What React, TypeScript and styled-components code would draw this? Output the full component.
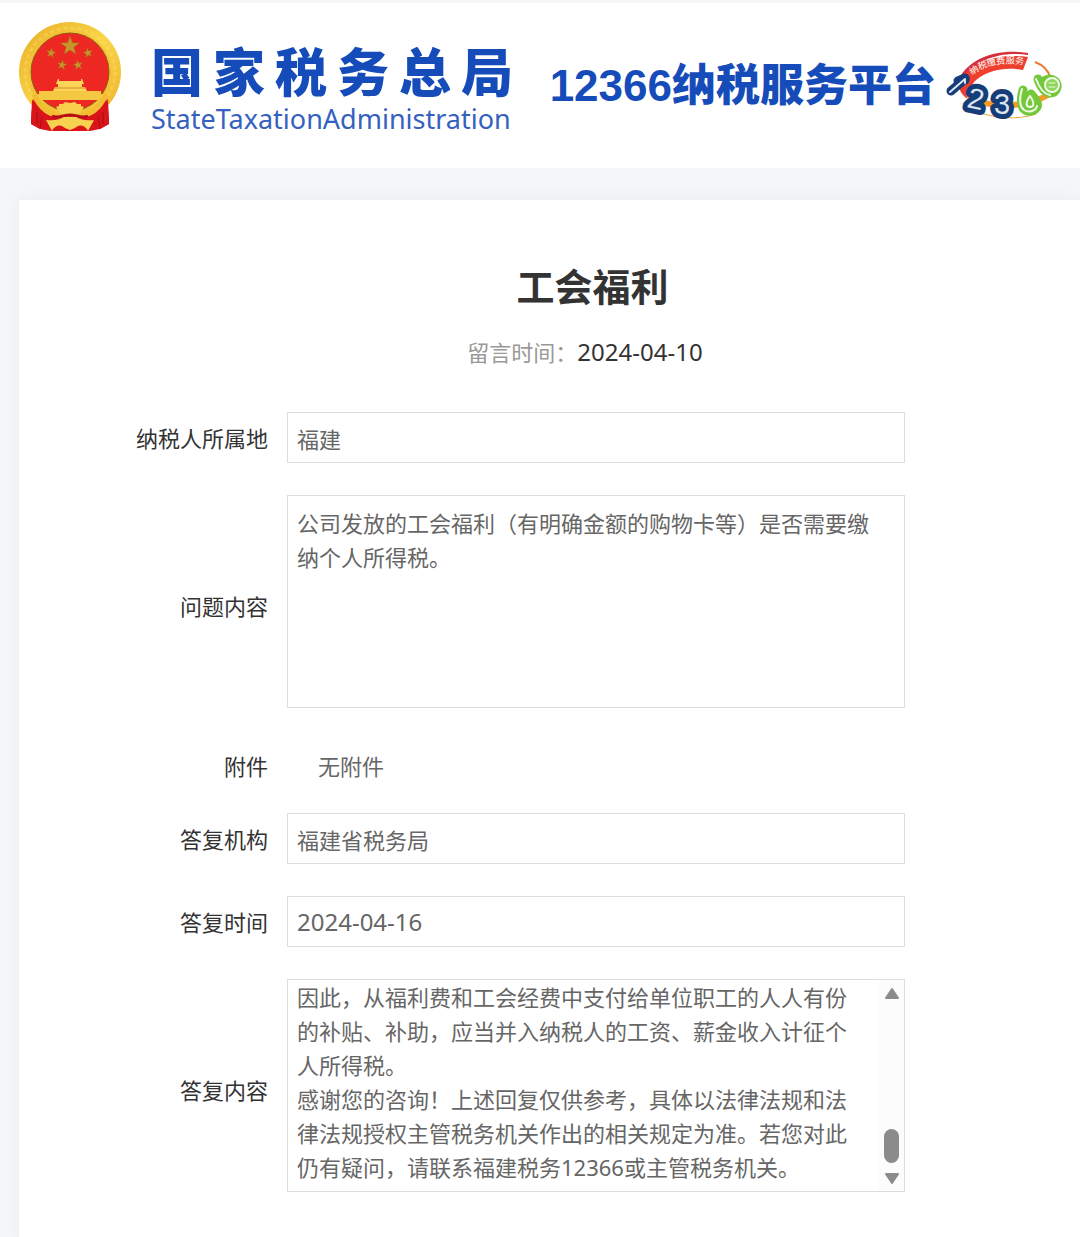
import React, { useRef } from "react";
import styled, { createGlobalStyle } from "styled-components";

const sans = `"Noto Sans", "Noto Sans CJK SC", sans-serif`;
const brandBlue = "#154cba";

const GlobalStyle = createGlobalStyle`
  * { box-sizing: border-box; }
  body { margin: 0; background: #f4f6f8; color: #333; font-family: ${sans}; }
`;

const Header = styled.header`
  display: flex;
  align-items: flex-start;
  height: 168px;
  padding: 19px 16px 0 19px;
  border-top: 3px solid #f5f5f5;
  background: #fff;
`;

const Brand = styled.a`
  display: flex;
  align-items: flex-start;
  flex: none;
  color: ${brandBlue};
  text-decoration: none;
`;

const BrandText = styled.span`
  display: flex;
  flex-direction: column;
  gap: 5px;
  margin-left: 30px;
  padding-top: 20px;
`;

const BrandName = styled.span`
  font: 900 52px/56px "Noto Sans CJK SC", sans-serif;
  letter-spacing: 10px;
`;

const BrandLatin = styled.span`
  font: 400 27px/32px ${sans};
  color: #3561c0;
`;

const Platform = styled.div`
  display: flex;
  align-items: center;
  flex: none;
  gap: 10px;
  margin-left: auto;
  padding-top: 29px;
`;

const PlatformName = styled.span`
  color: ${brandBlue};
  font: 900 44px/68px "Liberation Sans", "Noto Sans CJK SC", sans-serif;
`;

const Card = styled.main`
  margin: 32px 0 0 19px;
  padding: 60px 0 45px;
  background: #fff;
  box-shadow: 0 0 16px rgba(60, 80, 110, 0.05);
`;

const TitleBlock = styled.div`
  display: flex;
  flex-direction: column;
  align-items: center;
  margin-bottom: 42px;
`;

const Title = styled.h1`
  margin: 0 0 24px 86px;
  font: 700 38px/50px "Noto Sans CJK SC", sans-serif;
`;

const Posted = styled.p`
  display: flex;
  align-items: center;
  margin: 0 0 0 71px;
  color: #999;
  font-size: 22px;
  line-height: 36px;
`;

const PostedDate = styled.time`
  color: #333;
  font-size: 24px;
`;

const Form = styled.form`
  display: grid;
  grid-template-columns: 249px minmax(0, 618px);
  column-gap: 19px;
  align-items: center;
`;

const Row = styled.div<{ $after?: number }>`
  display: grid;
  grid-column: 1 / -1;
  grid-template-columns: subgrid;
  align-items: center;
  margin-bottom: ${(p) => p.$after ?? 32}px;
`;

const Label = styled.label<{ $tall?: boolean }>`
  padding-top: ${(p) => (p.$tall ? 8 : 0)}px;
  text-align: right;
  font-size: 22px;
  line-height: 34px;
`;

const Field = styled.input<{ $numeric?: boolean }>`
  width: 100%;
  height: 51px;
  padding: 0 9px;
  border: 1px solid #ddd;
  background: #fff;
  color: #666;
  font-family: ${sans};
  font-size: ${(p) => (p.$numeric ? 24 : 22)}px;
  outline: none;
`;

const AreaFrame = styled.div`
  display: flex;
  height: 213px;
  border: 1px solid #ddd;
`;

const Area = styled.textarea<{ $scrolled?: boolean }>`
  flex: 1;
  min-width: 0;
  padding: ${(p) => (p.$scrolled ? "0 14px 0 9px" : "10px 16px 0 9px")};
  border: 0;
  background: #fff;
  color: #666;
  font: 400 22px/34px ${sans};
  resize: none;
  overflow: hidden;
  outline: none;
`;

const Attachment = styled.output`
  padding-left: 31px;
  color: #666;
  font-size: 22px;
  line-height: 34px;
`;

const Scrollbar = styled.div`
  display: flex;
  flex-direction: column;
  align-items: center;
  flex: none;
  width: 25px;
  padding: 7px 0 6px;
  background: #fcfcfc;
`;

const Arrow = styled.button`
  display: flex;
  padding: 0;
  border: 0;
  background: none;
`;

const Thumb = styled.div`
  width: 15px;
  height: 34px;
  margin: auto 0 9px;
  border-radius: 8px;
  background: #8b8b8b;
`;

const star = (cx: number, cy: number, r: number, turn = 0) =>
  Array.from({ length: 10 }, (_, i) => {
    const a = ((i * 36 - 90 + turn) * Math.PI) / 180;
    const d = i % 2 ? r * 0.4 : r;
    return `${cx + d * Math.cos(a)},${cy + d * Math.sin(a)}`;
  }).join(" ");

function Emblem() {
  return (
    <svg width="102" height="110" viewBox="0 0 102 110" role="img" aria-label="国徽">
      <defs>
        <linearGradient id="gold" x1="0" y1="0" x2="1" y2="1">
          <stop offset="0" stopColor="#e9ad25" />
          <stop offset="0.5" stopColor="#f9d548" />
          <stop offset="1" stopColor="#eeb12b" />
        </linearGradient>
      </defs>
      <ellipse cx="51" cy="50" rx="51" ry="50" fill="url(#gold)" />
      <ellipse cx="51" cy="50" rx="45" ry="44" fill="none" stroke="#ffe373" strokeWidth="3" strokeDasharray="4 3" opacity="0.35" />
      <path d="M15 75c-2 9-3 18-3 27l9 5 10 2h40l10-2 9-5c0-9-1-18-3-27Z" fill="#d9151b" />
      <ellipse cx="51" cy="52" rx="42" ry="43" fill="#f4c236" />
      <ellipse cx="51" cy="50" rx="39" ry="39" fill="#ed2822" stroke="#8d5a17" strokeWidth="1" />
      <g fill="#c9952b" stroke="#a96b19" strokeWidth="0.5">
        <polygon points={star(51, 24, 10)} />
        <polygon points={star(32, 31, 5, 10)} />
        <polygon points={star(69, 31, 5, -10)} />
        <polygon points={star(43, 43, 5, 10)} />
        <polygon points={star(59, 43, 5, -10)} />
      </g>
      <path d="M39 57h1v2h22v-2h1l2 5h-2v3h3l2 4h-2v3h-30v-3h-2l2-4h3v-3h-2Z" fill="#fbd557" />
      <path d="M36 66h30" stroke="#d98b22" />
      <path d="M20 69h62v3l5 1v5H15v-5l5-1Z" fill="#f5c842" />
      <path d="M13 77c4 9 12 16 21 20 5-1 11-4 17-4s12 3 17 4c9-4 17-11 21-20l1 25-9 5-5-9c-6 2-15 1-25-2-10 3-19 4-25 2l-5 9-9-5Z" fill="#d9151b" />
      <path d="M15 72c6 15 16 22 30 22l6-3 6 3c14 0 24-7 30-22" fill="none" stroke="#f2bd33" strokeWidth="5" />
      <path d="m41 91-4-6 3-1v-2l4 0 2-2 5 1 5-1 2 2 4 0v2l3 1-4 6-6 2h-8Z" fill="#f7cd4c" />
      <path d="M33 94c6 3 12-1 18-1s12 4 18 1" fill="none" stroke="#b80e15" strokeWidth="3" />
      <path d="M27 98c9 1 15-1 18-3h12c3 2 9 4 18 3l-6 11c-3-6-8-6-10-5l-3 2-5 2-5-2-3-2c-2-1-7-1-10 5Z" fill="#f7d150" />
      <path d="M18 90v12M23 95l-2 11M79 95l2 11M84 90v12" stroke="#a80c14" />
    </svg>
  );
}

const Digit = styled.text`
  fill: #dbe5f2;
  stroke: #173d78;
  stroke-width: 10px;
  stroke-linejoin: round;
  paint-order: stroke;
  font: 400 29px "Liberation Sans", sans-serif;
`;

const Slogan = styled.text`
  fill: #fff;
  font: 400 9px "Noto Sans CJK SC", sans-serif;
`;

function HotlineMark() {
  return (
    <svg width="118" height="70" viewBox="0 0 118 70" role="img" aria-label="12366">
      <path d="M13 28C23 7 52-3 82 2v2C54 0 31 9 20 25" fill="#d4303c" />
      <path d="M17 26C28 10 54 2 82 6l-5 13c-21-4-38 2-48 11-5 5-5 12 0 18l-9-1c-8-7-9-14-3-21Z" fill="#ee3f2e" />
      <path id="slogan-arc" d="M26 24C38 15 55 10 80 14" fill="none" />
      <Slogan>
        <textPath href="#slogan-arc">纳税缴费服务</textPath>
      </Slogan>
      <path d="M89 11c8 3 13 8 15 15" fill="none" stroke="#ec7a32" strokeWidth="2" />
      <path d="M22 44c18 14 56 14 82-1" fill="none" stroke="#f79b28" strokeWidth="6" />
      <path d="M30 60c18 8 42 9 60 3" fill="none" stroke="#f0a23c" />
      <g fill="none" strokeLinecap="round" strokeLinejoin="round">
        <path d="m5 40 14-12v1" stroke="#173d78" strokeWidth="9" />
        <path d="m12 30 7-3" stroke="#173d78" strokeWidth="9" />
        <path d="m4 41 15-13v4" stroke="#dbe5f2" strokeWidth="2" />
      </g>
      <Digit x="22" y="58" transform="rotate(12 30 48)">2</Digit>
      <Digit x="48" y="63">3</Digit>
      <g strokeLinecap="round" strokeLinejoin="round">
        <path d="M77 39c-2 7-2 14 0 18 4 5 11 4 14-1 2-5-3-9-6-13" fill="#73c83c" stroke="#73c83c" strokeWidth="9" />
        <path d="M76 38c-3 10-3 17 2 21 5 3 12 1 13-4M84 45c-5 7-4 11 0 11s5-4 0-11" fill="none" stroke="#effae5" strokeWidth="2" />
        <path d="M92 28c2 6 5 13 12 14 7 0 9-8 5-12-4-3-8-2-11 0" fill="#73c83c" stroke="#73c83c" strokeWidth="9" />
        <path d="M90 28c3 8 7 15 14 16" fill="none" stroke="#effae5" strokeWidth="2" />
        <circle cx="106" cy="34" r="7" fill="#8fd45d" stroke="#effae5" strokeWidth="2" />
        <path d="M103 32h6M103 36h6" stroke="#effae5" />
      </g>
    </svg>
  );
}

const answer =
  "因此，从福利费和工会经费中支付给单位职工的人人有份的补贴、补助，应当并入纳税人的工资、薪金收入计征个人所得税。\n感谢您的咨询！上述回复仅供参考，具体以法律法规和法律法规授权主管税务机关作出的相关规定为准。若您对此仍有疑问，请联系福建税务12366或主管税务机关。";

export default function App() {
  const answerRef = useRef<HTMLTextAreaElement>(null);
  const scroll = (by: number) => answerRef.current?.scrollBy({ top: by });

  return (
    <>
      <GlobalStyle />
      <Header>
        <Brand href="#">
          <Emblem />
          <BrandText>
            <BrandName>国家税务总局</BrandName>
            <BrandLatin>StateTaxationAdministration</BrandLatin>
          </BrandText>
        </Brand>
        <Platform>
          <PlatformName>12366纳税服务平台</PlatformName>
          <HotlineMark />
        </Platform>
      </Header>
      <Card>
        <TitleBlock>
          <Title>工会福利</Title>
          <Posted>
            留言时间：<PostedDate>2024-04-10</PostedDate>
          </Posted>
        </TitleBlock>
        <Form>
          <Row>
            <Label htmlFor="region">纳税人所属地</Label>
            <Field id="region" readOnly defaultValue="福建" />
          </Row>
          <Row $after={41}>
            <Label htmlFor="question" $tall>问题内容</Label>
            <AreaFrame>
              <Area id="question" readOnly defaultValue="公司发放的工会福利（有明确金额的购物卡等）是否需要缴纳个人所得税。" />
            </AreaFrame>
          </Row>
          <Row $after={30}>
            <Label htmlFor="attachment">附件</Label>
            <Attachment id="attachment">无附件</Attachment>
          </Row>
          <Row>
            <Label htmlFor="agency">答复机构</Label>
            <Field id="agency" readOnly defaultValue="福建省税务局" />
          </Row>
          <Row>
            <Label htmlFor="answered">答复时间</Label>
            <Field id="answered" $numeric readOnly defaultValue="2024-04-16" />
          </Row>
          <Row $after={0}>
            <Label htmlFor="answer" $tall>答复内容</Label>
            <AreaFrame>
              <Area id="answer" ref={answerRef} $scrolled readOnly defaultValue={answer} />
              <Scrollbar>
                <Arrow type="button" aria-label="向上滚动" onClick={() => scroll(-34)}>
                  <svg width="16" height="13" viewBox="0 0 16 13"><path d="M8 2 14 11H2Z" fill="#8b8b8b" stroke="#8b8b8b" strokeWidth="2" strokeLinejoin="round" /></svg>
                </Arrow>
                <Thumb />
                <Arrow type="button" aria-label="向下滚动" onClick={() => scroll(34)}>
                  <svg width="16" height="13" viewBox="0 0 16 13"><path d="M8 11 2 2h12Z" fill="#8b8b8b" stroke="#8b8b8b" strokeWidth="2" strokeLinejoin="round" /></svg>
                </Arrow>
              </Scrollbar>
            </AreaFrame>
          </Row>
        </Form>
      </Card>
    </>
  );
}
